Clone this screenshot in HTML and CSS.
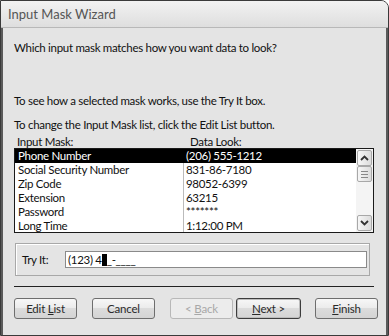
FILE: index.html
```html
<!DOCTYPE html>
<html lang="en">
<head>
    <meta charset="UTF-8">
    <title>Input Mask Wizard</title>
    <link rel="stylesheet" href="styles.css">
</head>
<body>
    <div class="window">
        <!-- Title Bar -->
        <div class="titlebar">Input Mask Wizard</div>

        <div class="client">
            <p class="question">Which input mask matches how you want data to look?</p>
            <p class="hint first">To see how a selected mask works, use the Try It box.</p>
            <p class="hint">To change the Input Mask list, click the Edit List button.</p>

            <div class="col-heads">
                <span class="head-mask">Input Mask:</span>
                <span class="head-look">Data Look:</span>
            </div>

            <!-- Mask List -->
            <div class="listbox">
                <div class="rows">
                    <div class="row selected"><span class="c1">Phone Number</span><span class="c2">(206) 555-1212</span></div>
                    <div class="row"><span class="c1">Social Security Number</span><span class="c2">831-86-7180</span></div>
                    <div class="row"><span class="c1">Zip Code</span><span class="c2">98052-6399</span></div>
                    <div class="row"><span class="c1">Extension</span><span class="c2">63215</span></div>
                    <div class="row"><span class="c1">Password</span><span class="c2">*******</span></div>
                    <div class="row"><span class="c1">Long Time</span><span class="c2">1:12:00 PM</span></div>
                </div>
                <div class="scrollbar">
                    <div class="sb-btn">
                        <svg width="9" height="6" viewBox="0 0 9 6"><path d="M1 5 L4.5 1.5 L8 5" fill="none" stroke="#333" stroke-width="1.8"/></svg>
                    </div>
                    <div class="sb-thumb">
                        <span></span><span></span><span></span>
                    </div>
                    <div class="sb-track"></div>
                    <div class="sb-btn">
                        <svg width="9" height="6" viewBox="0 0 9 6"><path d="M1 1 L4.5 4.5 L8 1" fill="none" stroke="#333" stroke-width="1.8"/></svg>
                    </div>
                </div>
            </div>

            <!-- Try It -->
            <div class="tryit">
                <span class="tryit-label">Try It:</span>
                <div class="tryit-input">(123) 4<span class="caret"></span>_-____</div>
            </div>

            <div class="separator"></div>

            <!-- Buttons -->
            <div class="buttons">
                <button class="btn">Edit <u>L</u>ist</button>
                <button class="btn">Cancel</button>
                <button class="btn disabled">&lt; <u>B</u>ack</button>
                <button class="btn default"><u>N</u>ext &gt;</button>
                <button class="btn"><u>F</u>inish</button>
            </div>
        </div>
    </div>
</body>
</html>
```

FILE: styles.css
```css
/* General Styles */
body {
    margin: 0;
    padding: 0;
    background: #fff;
    font-family: 'Lato', 'Noto Sans', sans-serif;
    font-size: 11.5px;
    font-weight: 400;
    letter-spacing: -0.3px;
    color: #111;
}

.window {
    width: 389px;
    height: 336px;
    box-sizing: border-box;
    border: 1px solid #3a3a3a;
    border-radius: 0 8px 0 0;
    background: #e4e4e4;
    overflow: hidden;
}

/* Title Bar */
.titlebar {
    height: 26px;
    line-height: 27px;
    padding-left: 7px;
    font-size: 13px;
    letter-spacing: 0;
    color: #555;
    background: linear-gradient(#f2f2f2, #dedede);
    border-bottom: 1px solid #b8b8b8;
}

.client {
    height: 306px;
    border-left: 2px solid #5a5a5a;
    border-right: 2px solid #5a5a5a;
    border-bottom: 2px solid #5a5a5a;
    padding: 11px 0 0 11px;
}

p {
    margin: 0;
    line-height: 16px;
}

.question {
    margin-top: 1px;
}

.hint.first {
    margin-top: 37px;
}

.hint {
    margin-top: 8px;
}

/* Column Heads */
.col-heads {
    display: flex;
    margin-top: 1px;
    line-height: 16px;
    height: 14px;
}

.head-mask {
    width: 173px;
    padding-left: 3px;
}

/* List Box */
.listbox {
    display: flex;
    width: 358px;
    height: 83px;
    border: 1px solid #1a1a1a;
    background: #fff;
    overflow: hidden;
}

.rows {
    flex: 1;
}

.row {
    display: flex;
    height: 14px;
    line-height: 14px;
}

.row .c1 {
    width: 165px;
    padding-left: 3px;
    border-right: 1px solid #bbb;
}

.row .c2 {
    padding-left: 2px;
}

.row.selected {
    background: #000;
    color: #fff;
}

.row.selected .c1 {
    border-right-color: #000;
}

/* Scrollbar */
.scrollbar {
    width: 17px;
    display: flex;
    flex-direction: column;
    padding: 1px 0;
    background: #f4f4f4;
}

.sb-btn, .sb-thumb {
    height: 14px;
    margin: 0 1px;
    border: 1px solid #a8a8a8;
    border-radius: 2px;
    background: linear-gradient(90deg, #f6f6f6, #dcdcdc);
    display: flex;
    align-items: center;
    justify-content: center;
}

.sb-thumb {
    flex-direction: column;
    gap: 2px;
}

.sb-thumb span {
    width: 7px;
    height: 1px;
    background: #888;
}

.sb-track {
    flex: 1;
}

/* Try It */
.tryit {
    display: flex;
    align-items: center;
    width: 353px;
    height: 31px;
    margin: 10px 0 0 1px;
    border: 1px solid #a8a8a8;
    box-shadow: inset 1px 1px 0 #fff;
}

.tryit-label {
    width: 43px;
    padding-left: 6px;
}

.tryit-input {
    display: flex;
    align-items: center;
    flex: 1;
    height: 15px;
    margin-right: 2px;
    padding-left: 2px;
    border: 1px solid #8a8a8a;
    background: #fff;
    line-height: 15px;
}

.caret {
    display: inline-block;
    width: 5px;
    height: 12px;
    background: #000;
}

.separator {
    width: 360px;
    height: 1px;
    margin-top: 10px;
    background: #222;
}

/* Buttons */
.buttons {
    display: flex;
    margin-top: 11px;
}

.btn {
    height: 21px;
    width: 63px;
    padding: 0;
    font-family: inherit;
    font-size: 11.5px;
    font-weight: 400;
    letter-spacing: -0.2px;
    color: #2a2a2a;
    border: 1px solid #6e6e6e;
    border-radius: 3px;
    background: linear-gradient(#f7f7f7 0%, #ececec 45%, #dcdcdc 50%, #d4d4d4 100%);
}

.btn + .btn {
    margin-left: 15px;
}

.btn.disabled {
    color: #a8a8a8;
    border-color: #b8b8b8;
    background: #ececec;
}

.btn.default {
    width: 65px;
    margin-left: 3px;
    border-color: #3c3c3c;
    box-shadow: inset 0 0 0 1px #bdbdbd;
}

.btn.default + .btn {
    margin-left: 14px;
}

.btn u {
    text-decoration: underline;
}
```
